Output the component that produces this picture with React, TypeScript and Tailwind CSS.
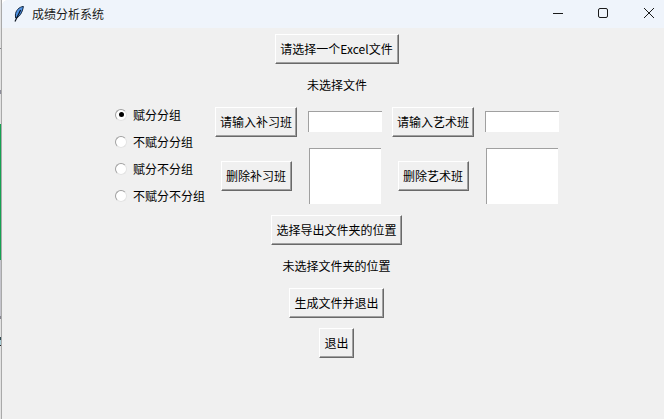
const FONT = "font-['Microsoft_YaHei','Noto_Sans_CJK_SC',sans-serif]"

function TkButton({ label, width }: { label: string; width: string }) {
  return (
    <button
      className={`${width} h-[30px] flex items-center justify-center bg-[#f0f0f0] text-[12px] text-black whitespace-nowrap border border-t-white border-l-white border-r-[#696969] border-b-[#696969] shadow-[inset_-1px_-1px_0_#a0a0a0]`}
    >
      {label}
    </button>
  )
}

function Radio({ label, checked }: { label: string; checked?: boolean }) {
  return (
    <div className="h-[27px] flex items-center text-[12px] text-black">
      <span className="w-[12px] h-[12px] mr-[6px] rounded-full bg-white border border-t-[#a0a0a0] border-l-[#a0a0a0] border-r-[#e3e3e3] border-b-[#e3e3e3] flex items-center justify-center">
        {checked && <span className="w-[5px] h-[5px] rounded-full bg-black" />}
      </span>
      {label}
    </div>
  )
}

function TitleBar() {
  return (
    <div className="h-[28px] flex items-center bg-[#eff4fb] rounded-tl-[6px]">
      <svg width="10" height="16" viewBox="0 0 10 16" className="ml-[12px] mr-[8px]">
        <path d="M9.4 0.4 C5 1 1.6 4.6 1.4 9 L1.6 12 C5 11.6 8.4 7 9.4 0.4 Z" fill="#4f93e6" stroke="#12263f" strokeWidth="1" />
        <path d="M6.6 4 L1 15.6" stroke="#0b1420" strokeWidth="1.2" fill="none" />
      </svg>
      <span className="text-[12px] text-[#1a1a1a]">成绩分析系统</span>
      <div className="ml-auto flex items-center">
        <svg width="46" height="28" viewBox="0 0 46 28">
          <path d="M25 13.5 H35" stroke="#1a1a1a" strokeWidth="1" />
        </svg>
        <svg width="46" height="28" viewBox="0 0 46 28">
          <rect x="24.5" y="8.5" width="9" height="9" rx="1.5" fill="none" stroke="#1a1a1a" strokeWidth="1" />
        </svg>
        <svg width="44" height="28" viewBox="0 0 44 28">
          <path d="M24 8 L34 18 M34 8 L24 18" stroke="#1a1a1a" strokeWidth="1" />
        </svg>
      </div>
    </div>
  )
}

export default function App() {
  return (
    <div className={`w-[664px] h-[419px] flex overflow-hidden bg-white ${FONT}`}>
      {/* bits of the desktop behind the window */}
      <div className="w-[2px] flex flex-col bg-[#e2e2e2] border-r border-[#a9a9a9]">
        <div className="h-[48px]" />
        <div className="h-[1px] bg-[#85858a]" />
        <div className="h-[41px]" />
        <div className="h-[4px] bg-[#8d8d9a]" />
        <div className="h-[30px]" />
        <div className="h-[136px] bg-[#16a152]" />
        <div className="h-[56px] bg-[#c4c4cc]" />
        <div className="h-[3px] bg-[#85858f]" />
        <div className="h-[18px]" />
        <div className="h-[3px] bg-[#2f4a52]" />
        <div className="h-[5px] bg-[#a9cdd6]" />
        <div className="h-[1px] bg-[#222222]" />
      </div>
      <div className="flex-1 flex flex-col bg-[#f0f0f0] rounded-tl-[6px]">
        <TitleBar />
        <div className="flex flex-col items-center pt-[6px] pl-[7px]">
          <TkButton label="请选择一个Excel文件" width="w-[124px]" />
          <div className="h-[20px] mt-[11px] ml-[1px] flex items-center text-[12px] text-black">未选择文件</div>
          <div className="w-full mt-[6px] pl-[106px] flex">
            <div className="w-[100px] flex flex-col shrink-0">
              <Radio label="赋分分组" checked />
              <Radio label="不赋分分组" />
              <Radio label="赋分不分组" />
              <Radio label="不赋分不分组" />
            </div>
            <div className="mt-[6px] grid grid-cols-[82px_95px_82px_95px] grid-rows-[30px_56px] gap-y-[11px] justify-items-center items-center">
              <TkButton label="请输入补习班" width="w-[82px]" />
              <div className="w-[74px] h-[21px] -mt-[1px] bg-white border-t border-l border-[#a0a0a0]" />
              <TkButton label="请输入艺术班" width="w-[82px]" />
              <div className="w-[74px] h-[21px] -mt-[1px] bg-white border-t border-l border-[#a0a0a0]" />
              <TkButton label="删除补习班" width="w-[71px]" />
              <div className="w-[72px] h-[56px] bg-white border-t border-l border-[#a0a0a0]" />
              <TkButton label="删除艺术班" width="w-[71px]" />
              <div className="w-[72px] h-[56px] bg-white border-t border-l border-[#a0a0a0]" />
            </div>
          </div>
          <div className="mt-[6px]">
            <TkButton label="选择导出文件夹的位置" width="w-[131px]" />
          </div>
          <div className="h-[20px] mt-[11px] flex items-center text-[12px] text-black">未选择文件夹的位置</div>
          <div className="mt-[12px]">
            <TkButton label="生成文件并退出" width="w-[95px]" />
          </div>
          <div className="mt-[10px]">
            <TkButton label="退出" width="w-[35px]" />
          </div>
        </div>
      </div>
    </div>
  )
}
